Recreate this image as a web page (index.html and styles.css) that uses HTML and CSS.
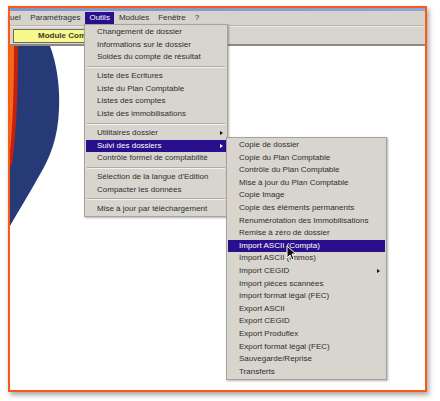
FILE: index.html
```html
<!DOCTYPE html>
<html lang="fr">
<head>
    <meta charset="UTF-8">
    <title>Outils - Suivi des dossiers</title>
    <link rel="stylesheet" href="styles.css">
</head>
<body>
    <div class="window">
        <div class="titlebar"></div>
        <div class="menubar">
            <span class="menubar-item first">uel</span>
            <span class="menubar-item">Paramétrages</span>
            <span class="menubar-item active">Outils</span>
            <span class="menubar-item">Modules</span>
            <span class="menubar-item">Fenêtre</span>
            <span class="menubar-item">?</span>
        </div>
        <div class="toolbar">
            <div class="module-box">Module Com</div>
        </div>
        <div class="content">
            <!-- logo arc on the left edge -->
            <svg class="logo" width="60" height="190" viewBox="0 0 60 190">
                <path d="M0,0 L40,0 C47,18 50,42 49,63 C48,92 40,112 29,130 C19,148 8,166 0,180 Z" fill="#263a78"/>
                <path d="M0,0 L8,0 C8,40 7,80 2,118 L0,120 Z" fill="#c8200c"/>
                <path d="M0,0 L4,0 C4,40 3,75 0,105 Z" fill="#f26a1b"/>
            </svg>
        </div>
    </div>

    <div class="menu menu-outils">
        <div class="item">Changement de dossier</div>
        <div class="item">Informations sur le dossier</div>
        <div class="item">Soldes du compte de résultat</div>
        <div class="separator"></div>
        <div class="item">Liste des Ecritures</div>
        <div class="item">Liste du Plan Comptable</div>
        <div class="item">Listes des comptes</div>
        <div class="item">Liste des immobilisations</div>
        <div class="separator"></div>
        <div class="item has-sub">Utilitaires dossier</div>
        <div class="item has-sub selected">Suivi des dossiers</div>
        <div class="item">Contrôle formel de comptabilité</div>
        <div class="separator"></div>
        <div class="item">Sélection de la langue d'Edition</div>
        <div class="item">Compacter les données</div>
        <div class="separator"></div>
        <div class="item">Mise à jour par téléchargement</div>
    </div>

    <div class="menu menu-suivi">
        <div class="item">Copie de dossier</div>
        <div class="item">Copie du Plan Comptable</div>
        <div class="item">Contrôle du Plan Comptable</div>
        <div class="item">Mise à jour du Plan Comptable</div>
        <div class="item">Copie Image</div>
        <div class="item">Copie des éléments permanents</div>
        <div class="item">Renumérotation des Immobilisations</div>
        <div class="item">Remise à zéro de dossier</div>
        <div class="item selected">Import ASCII (Compta)</div>
        <div class="item">Import ASCII (Immos)</div>
        <div class="item has-sub">Import CEGID</div>
        <div class="item">Import pièces scannées</div>
        <div class="item">Import format légal (FEC)</div>
        <div class="item">Export ASCII</div>
        <div class="item">Export CEGID</div>
        <div class="item">Export Produflex</div>
        <div class="item">Export format légal (FEC)</div>
        <div class="item">Sauvegarde/Reprise</div>
        <div class="item">Transferts</div>
    </div>

    <!-- mouse pointer -->
    <svg class="cursor" width="11" height="16" viewBox="0 0 11 16">
        <path d="M1,1 L1,13 L4,10 L6,15 L8,14 L6,9 L10,9 Z" fill="#111" stroke="#fff" stroke-width="1"/>
    </svg>
</body>
</html>
```

FILE: styles.css
```css
body {
    margin: 0;
    width: 440px;
    height: 401px;
    overflow: hidden;
    background: #fff;
    font-family: "Liberation Sans", Arial, sans-serif;
    font-size: 8px;
    color: #2e2e2e;
}

.window {
    margin: 6px 0 0 8px;
    width: 415px;
    height: 382px;
    border: 2px solid #fb5a16;
    box-shadow: 2px 3px 5px rgba(0, 0, 0, 0.35);
    display: flex;
    flex-direction: column;
    background: #fff;
}

.titlebar {
    height: 3px;
    background: linear-gradient(to right, #7f93cf, #8ea3da);
}

.menubar {
    height: 14px;
    display: flex;
    align-items: center;
    background: #d6d3cd;
    border-bottom: 1px solid #b9b6b0;
}

.menubar-item {
    padding: 0 4.5px;
    height: 12px;
    line-height: 12px;
}

.menubar-item.first {
    padding-left: 0;
    padding-right: 5px;
}

.menubar-item.active {
    background: #2a0f8c;
    color: #fff;
}

.toolbar {
    height: 17px;
    display: flex;
    align-items: center;
    padding-left: 3px;
    background: #d8d5cf;
    border-top: 1px solid #ece9e4;
    border-bottom: 2px solid #8d8a86;
}

/* the right end of the box sits under the Outils menu */
.module-box {
    height: 12px;
    line-height: 12px;
    padding: 0 2px 0 24px;
    background: #f8f88e;
    border: 1px solid #6b6b60;
    font-weight: bold;
    color: #3a3a2a;
    white-space: nowrap;
}

.content {
    flex: 1;
    position: relative;
}

.logo {
    display: block;
}

.menu {
    position: absolute;
    background: #d8d5cf;
    border: 1px solid #a6a29b;
    padding: 1px;
    box-shadow: 1px 1px 2px rgba(0, 0, 0, 0.3);
}

.menu-outils {
    left: 84px;
    top: 24px;
    width: 140px;
}

.menu-suivi {
    left: 226px;
    top: 137px;
    width: 157px;
}

.item {
    position: relative;
    height: 12.6px;
    line-height: 12.6px;
    padding-left: 11px;
    white-space: nowrap;
}

.item.selected {
    background: #2a0f8c;
    color: #fff;
}

.has-sub::after {
    content: "";
    position: absolute;
    right: 3px;
    top: 4.5px;
    border-left: 3px solid #111;
    border-top: 2px solid transparent;
    border-bottom: 2px solid transparent;
}

.menu-suivi .has-sub::after {
    right: 5px;
}

.has-sub.selected::after {
    border-left-color: #fff;
}

.separator {
    height: 0;
    margin: 2.2px 1px;
    border-top: 1px solid #b0aca5;
    border-bottom: 1px solid #f4f2ee;
}

.cursor {
    position: absolute;
    left: 286px;
    top: 245px;
}
```
